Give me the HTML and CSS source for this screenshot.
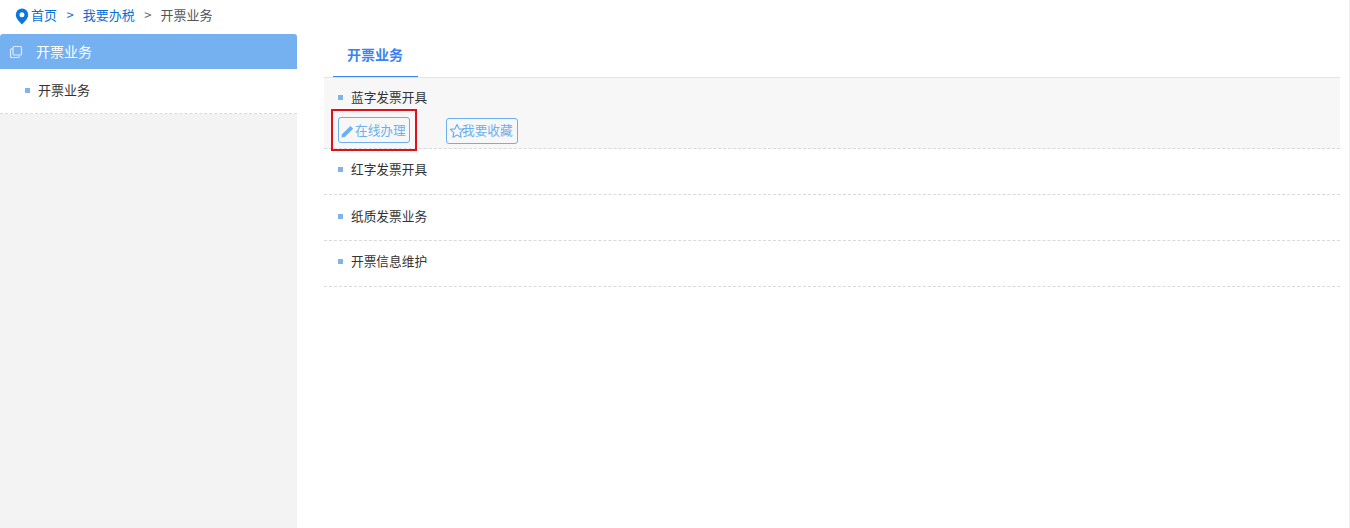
FILE: index.html
```html
<!DOCTYPE html>
<html lang="zh-CN">
<head>
    <meta charset="UTF-8">
    <title>开票业务</title>
    <link rel="stylesheet" href="styles.css">
</head>
<body>
    <div class="crumb">
        <svg class="crumb-pin" width="14" height="17" viewBox="0 0 14 17"><path fill="#0b76e0" fill-rule="evenodd" d="M7 0.500a6.200 6.200 0 0 1 6.200 6.200c0 3.800-3.600 6.900-6.200 9.800C4.400 13.600 0.800 10.500 0.800 6.700A6.200 6.200 0 0 1 7 0.500zM7 4.300a2.500 2.500 0 1 0 0 5 2.500 2.500 0 0 0 0-5z"/></svg>
        <a class="crumb-link">首页</a>
        <span class="crumb-sep blue">&gt;</span>
        <a class="crumb-link">我要办税</a>
        <span class="crumb-sep">&gt;</span>
        <span class="crumb-cur">开票业务</span>
    </div>
    <div class="main">
        <div class="side">
            <div class="side-box">
                <div class="side-head">
                    <svg class="head-icon" width="14" height="14" viewBox="0 0 14 14" fill="none" stroke="#dbe9fb" stroke-width="1.200"><rect x="4" y="1.500" width="8.500" height="8.500" rx="1"/><path d="M4 3.800H2.500a1 1 0 0 0-1 1v6.700a1 1 0 0 0 1 1h6.700a1 1 0 0 0 1-1V10"/></svg>
                    <span>开票业务</span>
                </div>
                <div class="side-item"><i class="dot"></i>开票业务</div>
            </div>
        </div>
        <div class="content">
            <div class="tabs"><div class="tab">开票业务</div></div>
            <div class="row open">
                <div class="row-title"><i class="dot"></i>蓝字发票开具</div>
                <div class="btns">
                    <span class="mark">
                        <a class="btn">
                            <svg class="btn-icon" width="14" height="14" viewBox="0 0 14 14"><path fill="#6cb0ee" d="M0.500 13.500l0.500-3.200 8.400-8.400 2.800 2.800-8.400 8.400z"/></svg><span>在线办理</span>
                        </a>
                    </span>
                    <a class="btn">
                        <svg class="btn-icon star" width="16" height="16" viewBox="0 0 16 16"><path fill="none" stroke="#6cb0ee" stroke-width="1.200" stroke-linejoin="round" d="M8 1.500l2 4.300 4.700 0.600-3.500 3.200 0.900 4.600L8 11.900l-4.100 2.300 0.900-4.600-3.500-3.200 4.700-0.600z"/></svg><span>我要收藏</span>
                    </a>
                </div>
            </div>
            <div class="row"><div class="row-title"><i class="dot"></i>红字发票开具</div></div>
            <div class="row row-low"><div class="row-title"><i class="dot"></i>纸质发票业务</div></div>
            <div class="row"><div class="row-title"><i class="dot"></i>开票信息维护</div></div>
        </div>
    </div>
</body>
</html>
```
FILE: styles.css
```css
* {
    box-sizing: border-box;
}
html, body {
    height: 100%;
    margin: 0;
}
body {
    font-family: "Noto Sans CJK SC", "Liberation Sans", sans-serif;
    font-size: 13px;
    color: #333;
    background-color: #fff;
    border-right: 1px solid #ededed;
    overflow: hidden;
}
.crumb {
    height: 34px;
    padding: 6px 0 0 15px;
    display: flex;
    align-items: flex-start;
    line-height: 17px;
    color: #555;
}
.crumb-pin {
    margin: 2px 2px 0 0;
}
.crumb-link {
    color: #0b6fd6;
}
.crumb-sep {
    margin: 0 9px 0 9.500px;
    color: #666;
}
.crumb-sep.blue {
    color: #0b6fd6;
}
.main {
    display: flex;
    height: 494px;
}
.side {
    width: 297px;
    background-color: #f3f3f3;
}
.side-box {
    background-color: #fff;
}
.side-head {
    height: 35px;
    padding: 0 0 2px 9px;
    display: flex;
    align-items: center;
    gap: 13px;
    font-size: 14px;
    color: #fff;
    background-color: #75b0f0;
    border-radius: 3px 3px 0 0;
}
.head-icon {
    margin-top: 2px;
}
.side-item {
    height: 45px;
    padding: 0 0 4px 25px;
    display: flex;
    align-items: center;
    color: #333;
    border-bottom: 1px dashed #d9d9d9;
}
.dot {
    width: 5px;
    height: 5px;
    margin: 2px 8px 0 0;
    background-color: #7db4ea;
}
.content {
    width: 1016px;
    margin-left: 27px;
}
.tabs {
    height: 44px;
    padding-left: 9px;
    border-bottom: 1px solid #e4e4e4;
}
.tab {
    width: 85px;
    height: 43px;
    padding-right: 1px;
    line-height: 40px;
    text-align: center;
    font-size: 14px;
    font-weight: bold;
    color: #3d82f0;
    border-bottom: 1px solid #3d82f0;
}
.row {
    height: 46px;
    padding: 10px 0 0 14px;
    border-bottom: 1px dashed #d9d9d9;
}
.row-low {
    padding-top: 11px;
}
.row.open {
    height: 71px;
    padding-top: 9px;
    background-color: #f7f7f7;
}
.row-title {
    display: flex;
    align-items: center;
    height: 18px;
    font-size: 12.700px;
    color: #333;
}
.btns {
    display: flex;
    align-items: center;
    margin-top: 12px;
}
.mark {
    display: block;
    margin: -8px 29px -7px -7px;
    padding: 6px 5px;
    border: 2px solid #e3101c;
}
.btn {
    display: flex;
    align-items: center;
    width: 72px;
    height: 26px;
    padding: 0 0 2px 2px;
    font-size: 12.700px;
    color: #6cb0ee;
    border: 1px solid #6cb0ee;
    border-radius: 3px;
    white-space: nowrap;
}
.btn-icon {
    flex: none;
    margin: 4px 0 0 0;
}
.star {
    margin: 3px -3px 0 0;
}
```
